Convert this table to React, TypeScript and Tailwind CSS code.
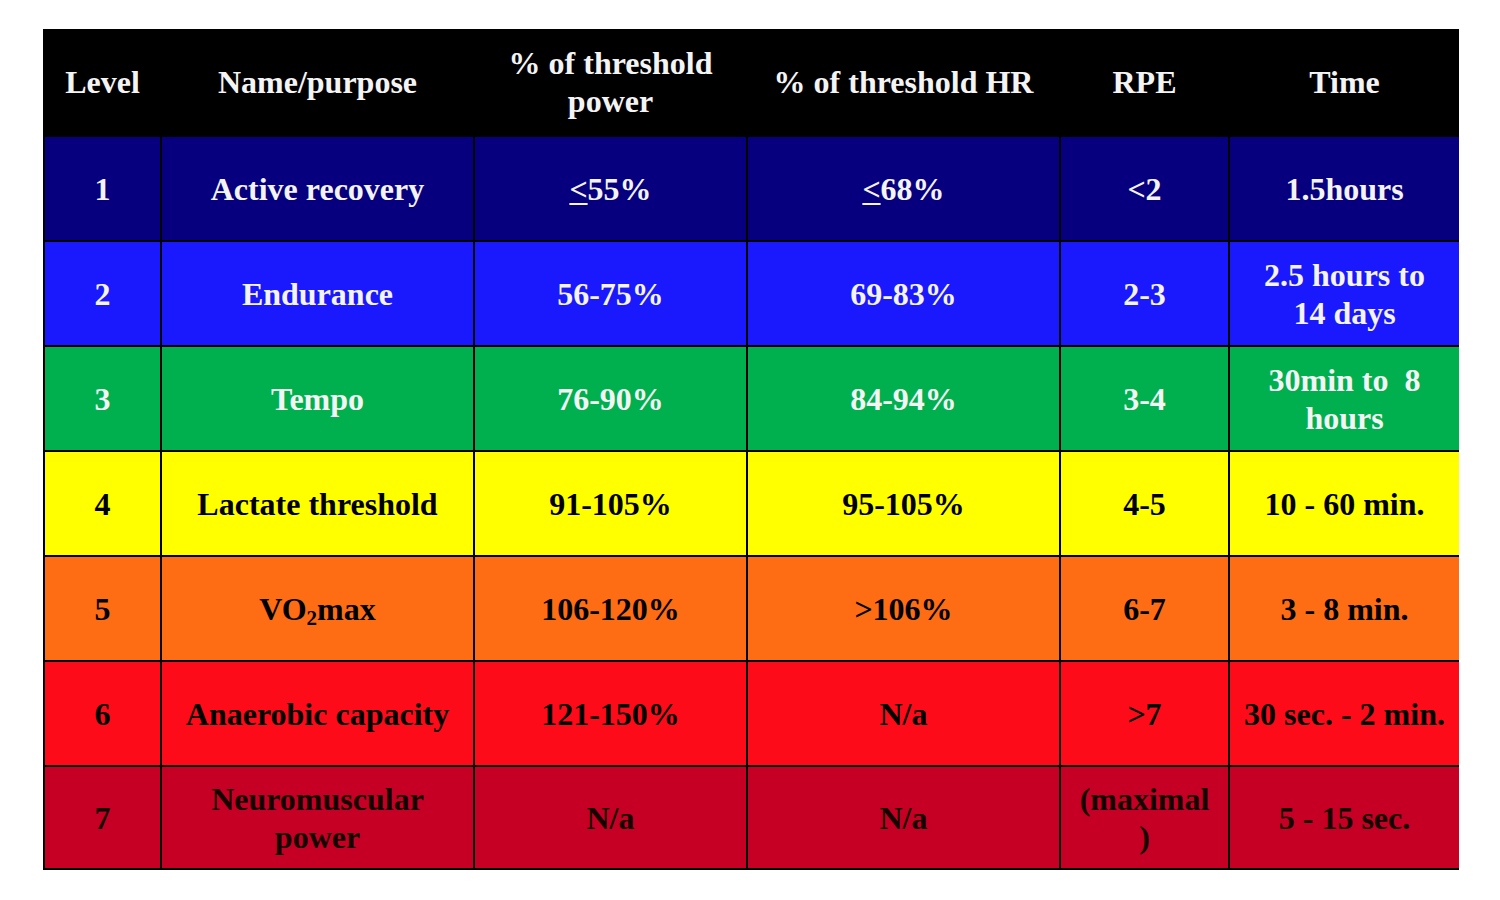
import React from "react";

type Row = {
  level: string;
  name: React.ReactNode;
  power: React.ReactNode;
  hr: React.ReactNode;
  rpe: React.ReactNode;
  time: React.ReactNode;
  bg: string;
  text: string;
};

const Le = ({ n }: { n: string }) => (
  <>
    <span className="underline decoration-2 underline-offset-[3px]">&lt;</span>
    {n}
  </>
);

const rows: Row[] = [
  { level: "1", name: "Active recovery", power: <Le n="55%" />, hr: <Le n="68%" />, rpe: "<2", time: "1.5hours", bg: "bg-[#06007f]", text: "text-[#f4f4f4]" },
  { level: "2", name: "Endurance", power: "56-75%", hr: "69-83%", rpe: "2-3", time: <>2.5 hours to<br />14 days</>, bg: "bg-[#1a18fd]", text: "text-[#f4f4f4]" },
  { level: "3", name: "Tempo", power: "76-90%", hr: "84-94%", rpe: "3-4", time: <>30min to&nbsp; 8<br />hours</>, bg: "bg-[#00b04f]", text: "text-[#f4f4f4]" },
  { level: "4", name: "Lactate threshold", power: "91-105%", hr: "95-105%", rpe: "4-5", time: "10 - 60 min.", bg: "bg-[#ffff00]", text: "text-black" },
  { level: "5", name: <>VO<sub className="text-[21px] relative top-[5px] align-baseline">2</sub>max</>, power: "106-120%", hr: ">106%", rpe: "6-7", time: "3 - 8 min.", bg: "bg-[#fe6d13]", text: "text-black" },
  { level: "6", name: "Anaerobic capacity", power: "121-150%", hr: "N/a", rpe: ">7", time: "30 sec. - 2 min.", bg: "bg-[#fe0b1a]", text: "text-black" },
  { level: "7", name: <>Neuromuscular<br />power</>, power: "N/a", hr: "N/a", rpe: <>(maximal<br />)</>, time: "5 - 15 sec.", bg: "bg-[#c50024]", text: "text-[#140000]" },
];

const headers: React.ReactNode[] = [
  "Level",
  "Name/purpose",
  <>% of threshold<br />power</>,
  "% of threshold HR",
  "RPE",
  "Time",
];

function Cell({ children, className }: { children: React.ReactNode; className: string }) {
  return (
    <div className={`flex items-center justify-center text-center leading-[38px] ${className}`}>
      <span>{children}</span>
    </div>
  );
}

export default function App() {
  return (
    <div className="min-h-screen w-full bg-white pt-[29px] pl-[43px]">
      <div className="w-[1416px] bg-black grid grid-cols-[115px_311px_271px_311px_167px_229px] grid-rows-[106px_repeat(6,103px)_101px] gap-[2px] pl-[2px] pb-[2px] font-bold text-[32px] font-['Liberation_Serif','Times_New_Roman',serif]">
        {headers.map((h, i) => (
          <Cell key={i} className="bg-black text-[#f4f4f4]">{h}</Cell>
        ))}
        {rows.map((r) => (
          <React.Fragment key={r.level}>
            <Cell className={`${r.bg} ${r.text}`}>{r.level}</Cell>
            <Cell className={`${r.bg} ${r.text}`}>{r.name}</Cell>
            <Cell className={`${r.bg} ${r.text}`}>{r.power}</Cell>
            <Cell className={`${r.bg} ${r.text}`}>{r.hr}</Cell>
            <Cell className={`${r.bg} ${r.text}`}>{r.rpe}</Cell>
            <Cell className={`${r.bg} ${r.text}`}>{r.time}</Cell>
          </React.Fragment>
        ))}
      </div>
    </div>
  );
}
